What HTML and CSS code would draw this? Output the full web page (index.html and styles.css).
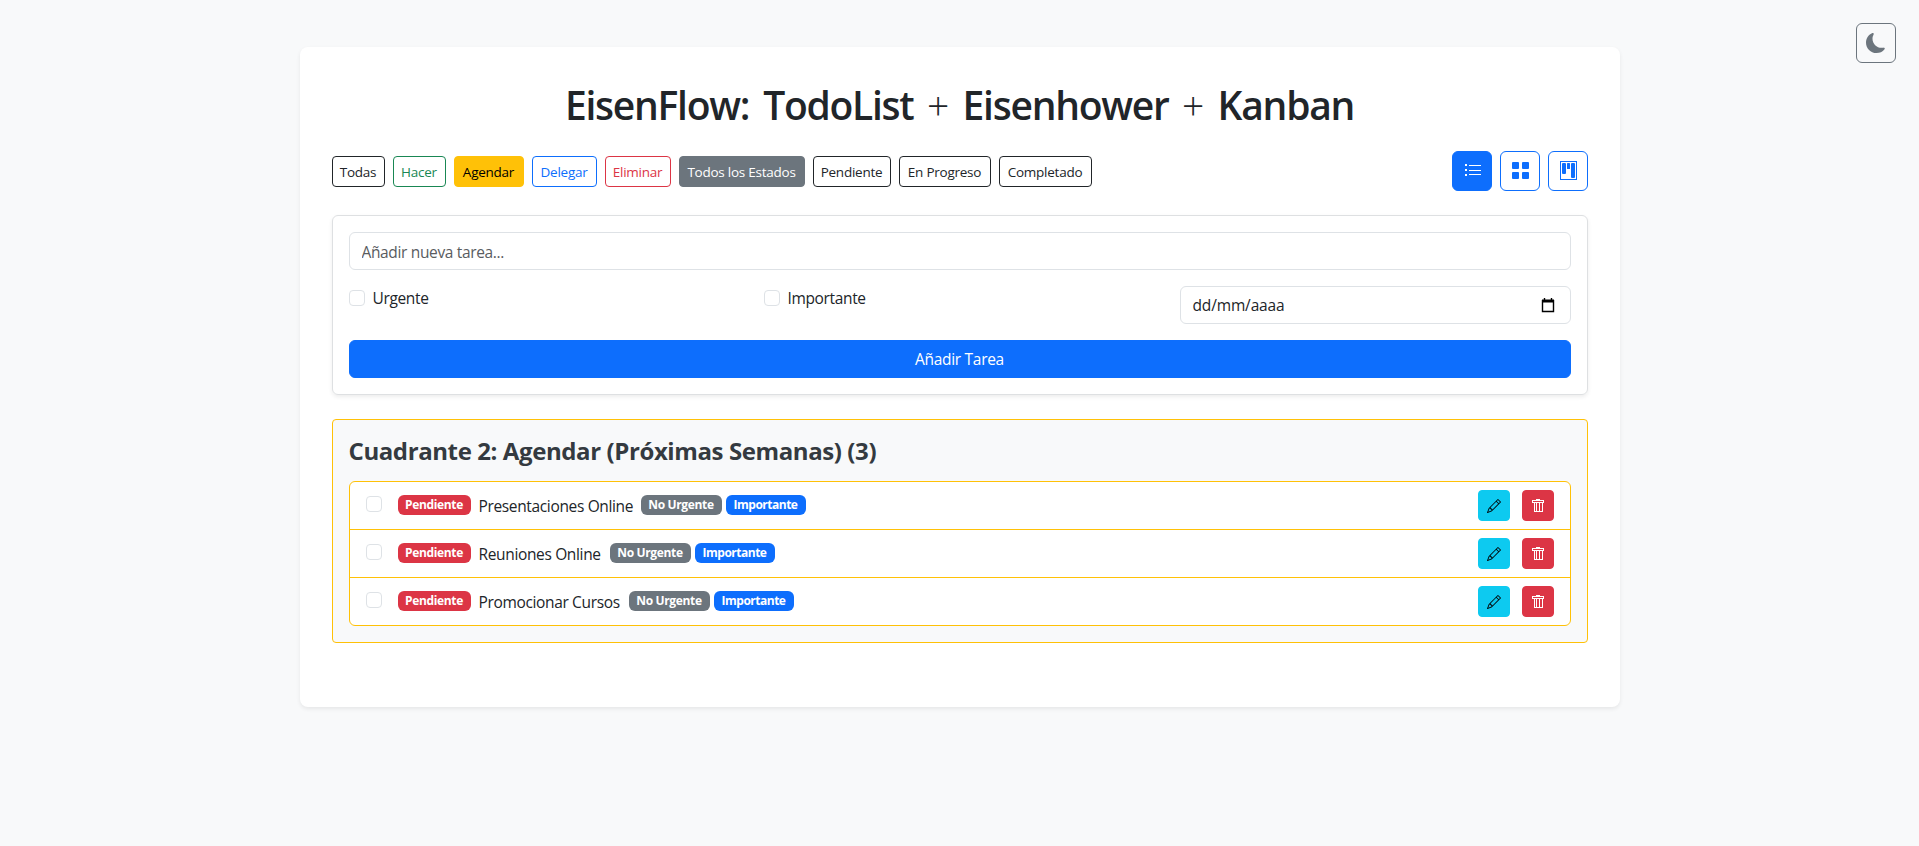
FILE: index.html
```html
<!DOCTYPE html>
<html lang="es">
<head>
<meta charset="utf-8">
<title>EisenFlow</title>
<link rel="stylesheet" href="styles.css">
</head>
<body>
<svg class="defs" aria-hidden="true">
  <symbol id="pencil" viewBox="0 0 16 16"><path d="M12.146.146a.5.5 0 0 1 .708 0l3 3a.5.5 0 0 1 0 .708l-10 10a.5.5 0 0 1-.168.11l-5 2a.5.5 0 0 1-.65-.65l2-5a.5.5 0 0 1 .11-.168zM11.207 2.5 13.5 4.793 14.793 3.5 12.5 1.207zm1.586 3L10.5 3.207 4 9.707V10h.5a.5.5 0 0 1 .5.5v.5h.5a.5.5 0 0 1 .5.5v.5h.293zm-9.761 5.175-.106.106-1.528 3.821 3.821-1.528.106-.106A.5.5 0 0 1 5 12.5V12h-.5a.5.5 0 0 1-.5-.5V11h-.5a.5.5 0 0 1-.468-.325"/></symbol>
  <symbol id="trash" viewBox="0 0 14 14"><path d="M5 0h4v1h4v3h-1v9H3V4H1V1h4zM2 2v1h10V2zm2 2v8h7V4zm1 0h1v8H5zm3 0h1v8H8z" fill-rule="evenodd"/></symbol>
</svg>
<button class="theme" aria-label="Tema"><svg width="20" height="20" viewBox="0 0 16 16"><path d="M6 .278a.77.77 0 0 1 .08.858 7.2 7.2 0 0 0-.878 3.46c0 4.021 3.278 7.277 7.318 7.277q.792-.001 1.533-.16a.79.79 0 0 1 .81.316.73.73 0 0 1-.031.893A8.35 8.35 0 0 1 8.344 16C3.734 16 0 12.286 0 7.71 0 4.266 2.114 1.312 5.124.06A.75.75 0 0 1 6 .278"/></svg></button>
<main class="app">
  <h1><span>EisenFlow: TodoList</span><i>+</i><span>Eisenhower</span><i>+</i><span>Kanban</span></h1>
  <div class="toolbar">
    <div class="filters">
      <button class="filter w53">Todas</button>
      <button class="filter w53 green">Hacer</button>
      <button class="filter w70 yellow">Agendar</button>
      <button class="filter w65 blue">Delegar</button>
      <button class="filter w66 red">Eliminar</button>
      <button class="filter w126 gray">Todos los Estados</button>
      <button class="filter w78">Pendiente</button>
      <button class="filter w92">En Progreso</button>
      <button class="filter w93">Completado</button>
    </div>
    <div class="views">
      <button class="view active" aria-label="Lista"><svg width="20" height="20"><path d="M3 3h2v2H3zM3 8h2v2H3zM3 13h2v2H3zM7 4h12v1H7zM7 9h12v1H7zM7 13h12v1H7z"/></svg></button>
      <button class="view" aria-label="Matriz"><svg width="20" height="20"><rect x="2" y="1" width="7" height="7" rx="1"/><rect x="12" y="1" width="7" height="7" rx="1"/><rect x="2" y="11" width="7" height="7" rx="1"/><rect x="12" y="11" width="7" height="7" rx="1"/></svg></button>
      <button class="view" aria-label="Kanban"><svg width="20" height="20"><rect x="2.5" y=".5" width="16" height="18" fill="none" stroke="currentColor"/><rect x="4" y="2" width="4" height="11" rx="1"/><rect x="9" y="2" width="3" height="6" rx=".5"/><rect x="13" y="2" width="4" height="15" rx="1"/></svg></button>
    </div>
  </div>
  <form class="card">
    <input class="field" type="text" placeholder="Añadir nueva tarea...">
    <div class="options">
      <label class="check"><span class="box"></span>Urgente</label>
      <label class="check"><span class="box"></span>Importante</label>
      <div class="field date"><span>dd/mm/aaaa</span><svg width="14" height="15"><path d="M1.5 2v11.500h11V2M3.500 0v2M10.500 0v2" fill="none" stroke="#000" stroke-width="1.4"/><path d="M1 1.500h12v3H1z" fill="#000"/></svg></div>
    </div>
    <button class="submit" type="button">Añadir Tarea</button>
  </form>
  <section class="quadrant">
    <h2>Cuadrante 2: Agendar (Próximas Semanas) (3)</h2>
    <ul>
      <li><span class="box"></span><b class="badge pending">Pendiente</b><span class="task t1">Presentaciones Online</span><b class="badge urgency">No Urgente</b><b class="badge importance">Importante</b><span class="actions"><button class="edit" aria-label="Editar"><svg width="14" height="14"><use href="#pencil"/></svg></button><button class="delete" aria-label="Eliminar"><svg width="14" height="14"><use href="#trash"/></svg></button></span></li>
      <li><span class="box"></span><b class="badge pending">Pendiente</b><span class="task t2">Reuniones Online</span><b class="badge urgency">No Urgente</b><b class="badge importance">Importante</b><span class="actions"><button class="edit" aria-label="Editar"><svg width="14" height="14"><use href="#pencil"/></svg></button><button class="delete" aria-label="Eliminar"><svg width="14" height="14"><use href="#trash"/></svg></button></span></li>
      <li><span class="box"></span><b class="badge pending">Pendiente</b><span class="task t3">Promocionar Cursos</span><b class="badge urgency">No Urgente</b><b class="badge importance">Importante</b><span class="actions"><button class="edit" aria-label="Editar"><svg width="14" height="14"><use href="#pencil"/></svg></button><button class="delete" aria-label="Eliminar"><svg width="14" height="14"><use href="#trash"/></svg></button></span></li>
    </ul>
  </section>
</main>
</body>
</html>
```
FILE: styles.css
```css
* { box-sizing: border-box; }
body {
  margin: 0;
  min-height: 846px;
  padding-top: 47px;
  background: #f8f9fa;
  color: #212529;
  font: 400 15.5px/24px "Open Sans", "Noto Sans", sans-serif;
  letter-spacing: -0.35px;
}
button { font: inherit; letter-spacing: inherit; padding: 0; border: 1px solid; cursor: pointer; white-space: nowrap; }
svg { display: block; fill: currentColor; }
.defs { position: absolute; width: 0; height: 0; }

.theme {
  position: absolute;
  top: 23px;
  right: 23px;
  width: 40px;
  height: 40px;
  display: grid;
  place-items: center;
  border-radius: 6px;
  background: transparent;
  color: #6c757d;
}
.app {
  width: 1320px;
  height: 660px;
  margin: 0 auto;
  padding: 32px;
  background: #fff;
  border-radius: 8px;
  box-shadow: 0 2px 4px rgba(0, 0, 0, .075);
}
h1 {
  display: flex;
  justify-content: center;
  gap: 12px;
  height: 48px;
  margin: 0 0 24px;
  font-size: 39px;
  line-height: 51px;
  font-weight: 600;
  letter-spacing: -1.25px;
  word-spacing: 5px;
}
h1 i { width: 25px; text-align: center; font-style: normal; font-weight: 300; letter-spacing: 0; }

.toolbar { display: flex; justify-content: space-between; align-items: center; height: 40px; margin-bottom: 24px; }
.filters, .views { display: flex; gap: 8px; }
.filter {
  height: 31px;
  border-radius: 4px;
  border-color: #212529;
  background: #fff;
  color: #212529;
  font-size: 13.5px;
  letter-spacing: -.25px;
  line-height: 30px;
}
.w53 { width: 53px; }
.w65 { width: 65px; }
.w66 { width: 66px; }
.w70 { width: 70px; }
.w78 { width: 78px; }
.w92 { width: 92px; }
.w93 { width: 93px; }
.w126 { width: 126px; }
.filter.green { color: #198754; border-color: #198754; }
.filter.yellow { color: #000; background: #ffc107; border-color: #ffc107; }
.filter.blue { color: #0d6efd; border-color: #0d6efd; }
.filter.red { color: #dc3545; border-color: #dc3545; }
.filter.gray { color: #fff; background: #6c757d; border-color: #6c757d; }
.view {
  width: 40px;
  height: 40px;
  display: grid;
  place-items: center;
  border-radius: 6px;
  background: #fff;
  color: #0d6efd;
  border-color: #0d6efd;
}
.view.active { background: #0d6efd; color: #fff; border-color: #0d6efd; }

.card {
  display: grid;
  gap: 16px;
  padding: 16px;
  margin: 0 0 24px;
  border: 1px solid #dee0e2;
  border-radius: 6px;
  box-shadow: 0 2px 4px rgba(0, 0, 0, .075);
}
.field {
  width: 100%;
  height: 38px;
  padding: 1px 12px 0;
  border: 1px solid #dee2e6;
  border-radius: 6px;
  background: #fff;
  color: #212529;
  font: inherit;
  letter-spacing: inherit;
}
.field::placeholder { color: #595c5f; opacity: 1; }
.date { display: flex; align-items: center; justify-content: space-between; padding: 0 15px 0 12px; letter-spacing: -.15px; }
.options { display: grid; grid-template-columns: 391px 392px 391px; gap: 24px; }
.check { display: flex; gap: 8px; height: 24px; line-height: 25px; }
.box { flex: none; width: 16px; height: 16px; margin-top: 4px; border: 1px solid #dee2e6; border-radius: 4px; background: #fff; }
.submit { height: 38px; border-color: #0d6efd; border-radius: 6px; background: #0d6efd; color: #fff; letter-spacing: -.3px; }

.quadrant { padding: 16px; border: 1px solid #ffc107; border-radius: 4px; background: #f8f9fa; }
h2 { margin: 0 0 16px; color: #343a40; font-size: 24px; line-height: 29px; font-weight: 700; letter-spacing: -.4px; }
ul { margin: 0; padding: 0; list-style: none; border: 1px solid #ffc107; border-radius: 6px; background: #fff; }
li { display: flex; align-items: center; height: 47px; padding: 0 16px; }
li + li { height: 48px; border-top: 1px solid #ffc107; }
li .box { margin: 0 16px 3px 0; }
.badge {
  height: 20px;
  margin-bottom: 1px;
  border-radius: 6px;
  color: #fff;
  font-size: 12px;
  line-height: 20px;
  font-weight: 700;
  text-align: center;
}
.pending { width: 73px; margin-right: 8px; background: #dc3545; }
.urgency { width: 81px; margin-left: 8px; margin-right: 4px; background: #6c757d; }
.importance { width: 80px; background: #0d6efd; letter-spacing: -.5px; }
.task { white-space: nowrap; }
.t1 { width: 154px; }
.t2 { width: 123px; }
.t3 { width: 142px; }
.actions { display: flex; gap: 12px; margin-left: auto; }
.actions button { display: grid; place-items: center; width: 32px; height: 31px; border-radius: 4px; }
.actions .edit { color: #000; background: #0dcaf0; border-color: #0dcaf0; }
.actions .delete { color: #fff; background: #dc3545; border-color: #dc3545; }
```
